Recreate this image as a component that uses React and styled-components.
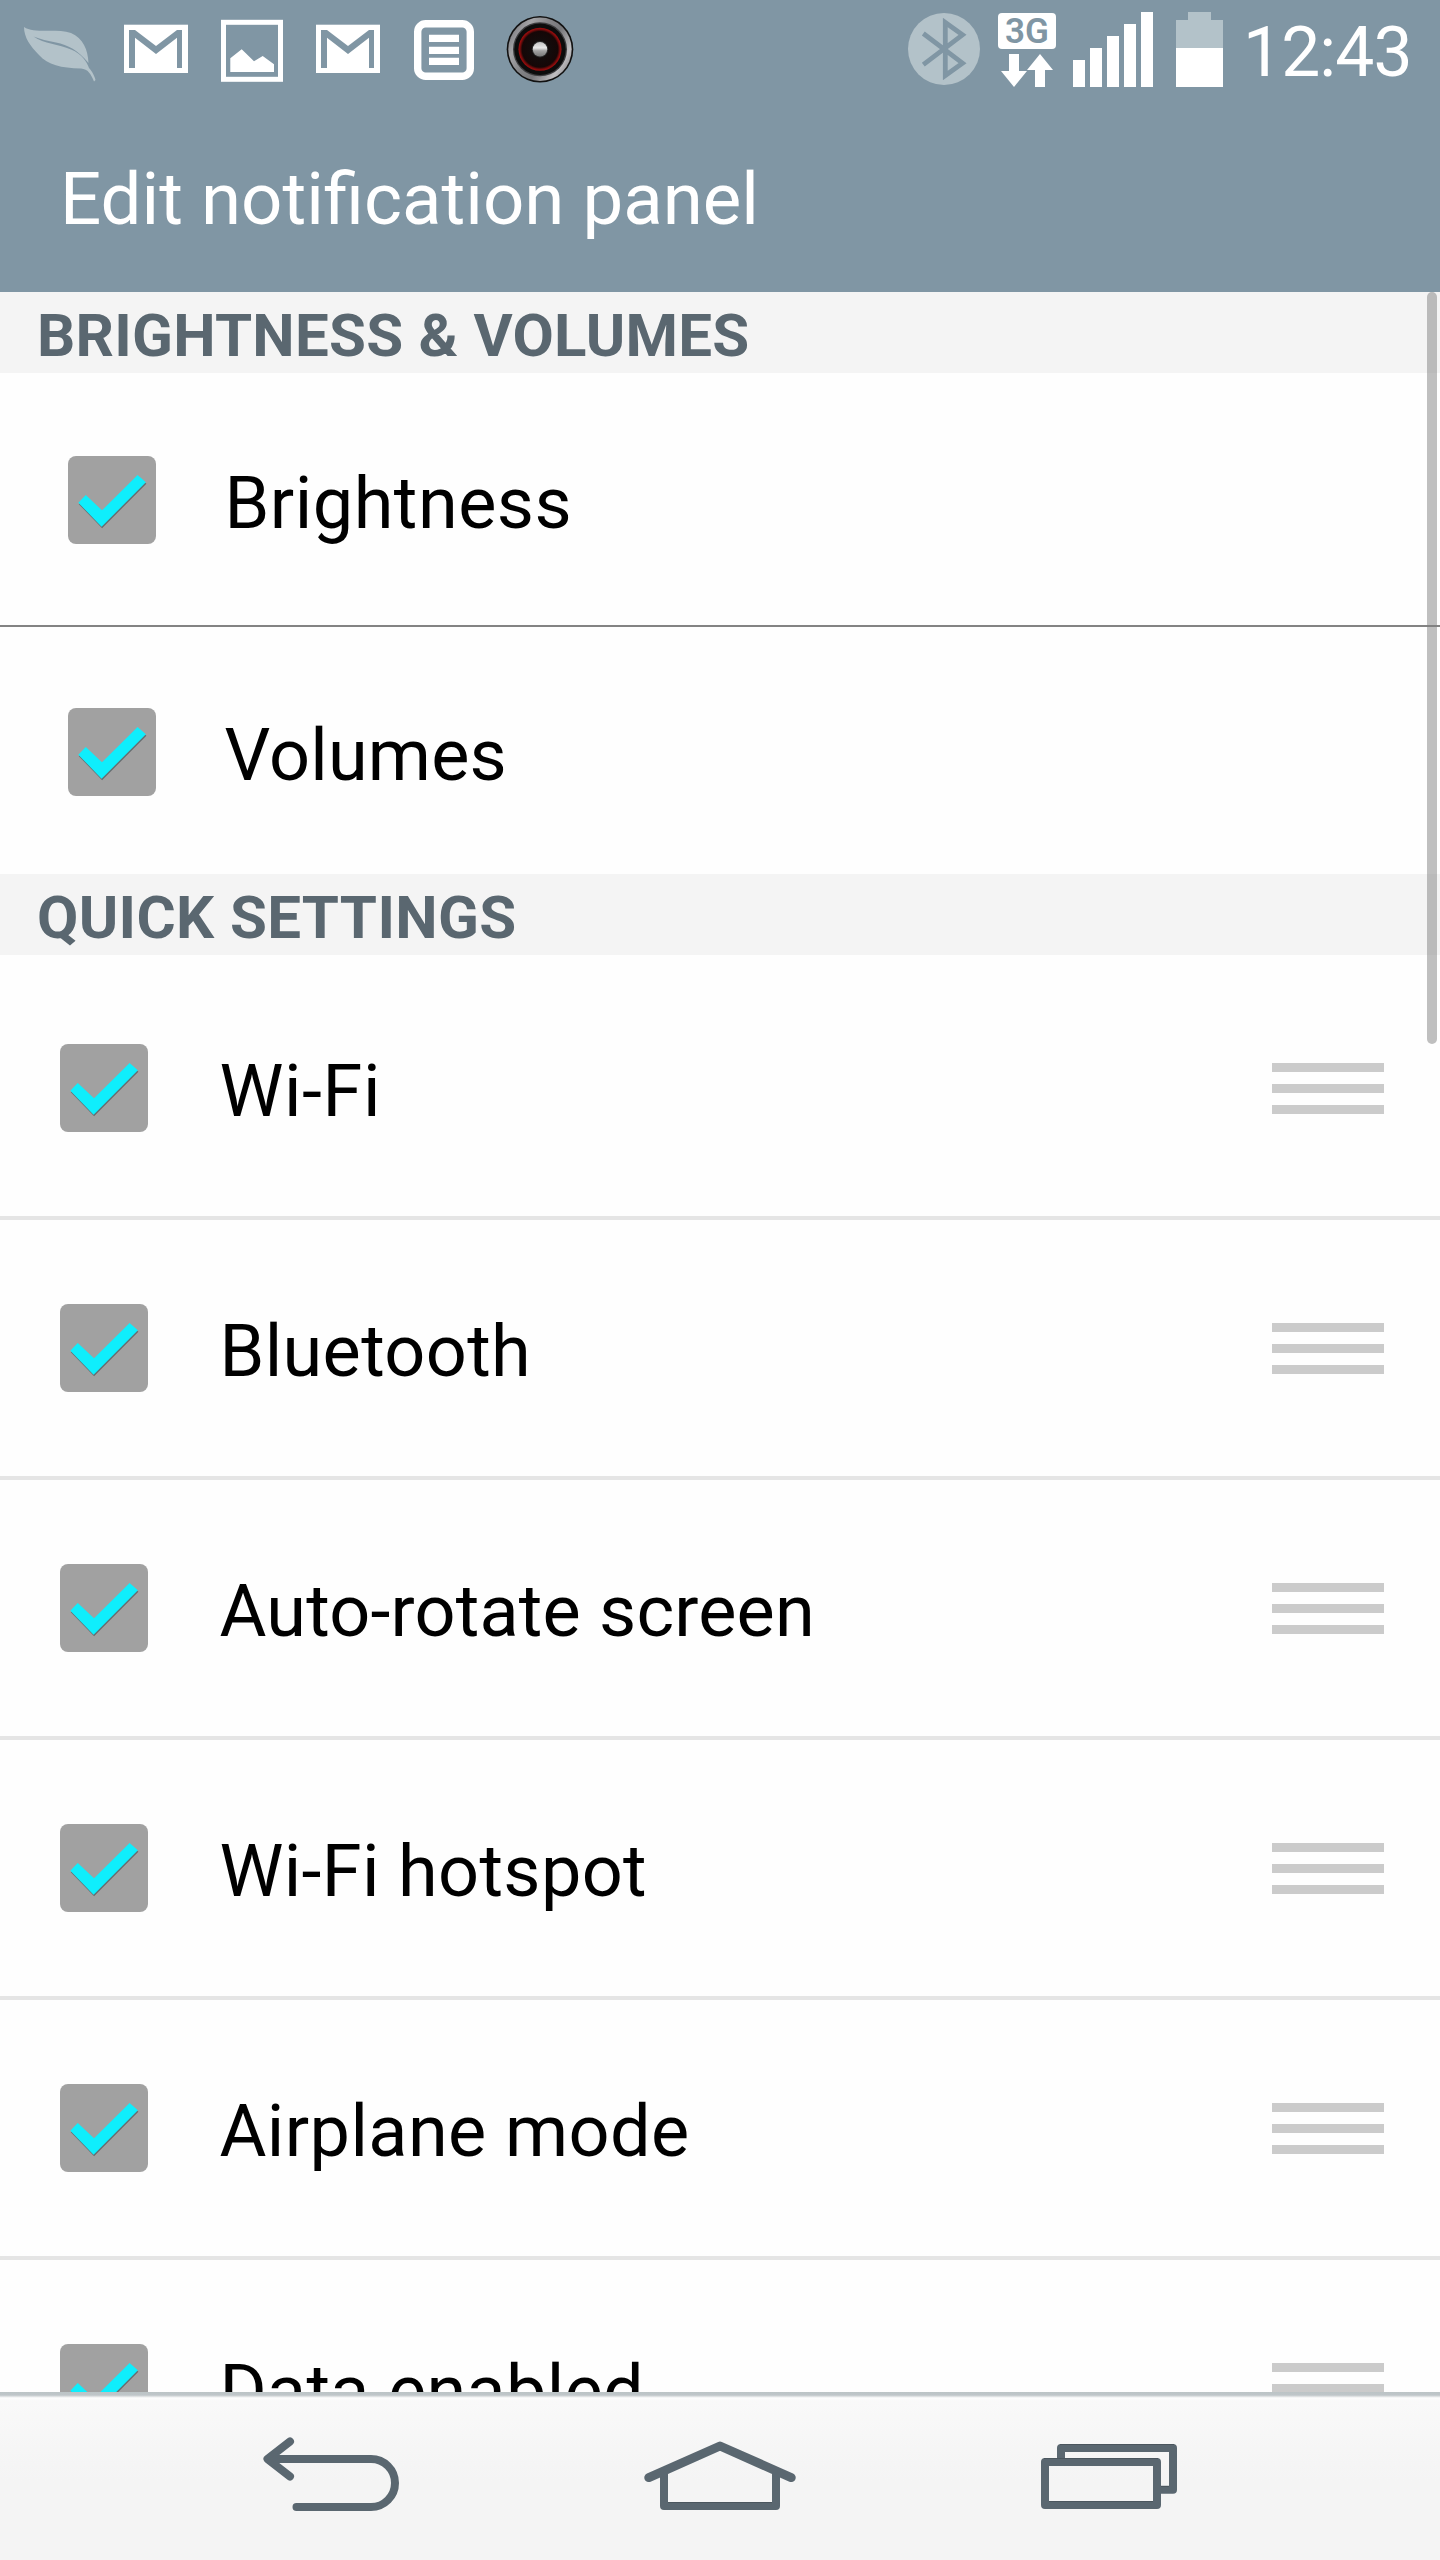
import React, { useState } from "react";
import styled, { createGlobalStyle } from "styled-components";

const SLATE = "#8096a4";
const FADED = "#b3c2c9";
const INK = "#5a6770";

const volumeItems = [
	{ label: "Brightness", spacing: 0.5 },
	{ label: "Volumes", spacing: 0.2 },
];

const quickItems = [
	{ label: "Wi-Fi", spacing: 0.6 },
	{ label: "Bluetooth", spacing: 0.35 },
	{ label: "Auto-rotate screen", spacing: 0.2 },
	{ label: "Wi-Fi hotspot", spacing: 0.35 },
	{ label: "Airplane mode", spacing: 0.4 },
	{ label: "Data enabled", spacing: 0.3 },
];

// ---- Status bar icons ----

const LeafIcon = () => (
	<Slot viewBox="0 0 96 100">
		<path
			d="M12 27 C22 34 44 28 59 33 C71 38 76 50 76.500 63 C66 50 56 45 44 42.500 C36 41 28 39 21.500 36.500 C32 44 47 44 59 49.500 C70 54 75 62 77 68 C80 71 83 77 83.500 80 L82 81.500 C79 74 76 69 69 68.500 C49 68 36 65 27 55 C18 46 12 37 12 27 Z"
			fill={FADED}
		/>
	</Slot>
);

const MailIcon = () => (
	<Slot viewBox="0 0 96 100">
		<rect x="16" y="24.700" width="64" height="48.300" fill="#fff" />
		<path
			d="M21 68 V30 H27 L48 46 L69 30 H74 V68 H69 V37.700 L48 54 L27 37.700 V68 Z"
			fill={SLATE}
		/>
	</Slot>
);

const PictureIcon = () => (
	<Slot viewBox="0 0 96 100">
		<rect
			x="19.500"
			y="22.300"
			width="57"
			height="57"
			fill="none"
			stroke="#fff"
			strokeWidth="5"
		/>
		<path
			d="M26.300 58.300 L37.700 49.300 L50 61.300 L58.700 56 L70 64.300 V72 H26.300 Z"
			fill="#fff"
		/>
	</Slot>
);

const NoteIcon = () => (
	<Slot viewBox="0 0 96 100">
		<rect
			x="21.700"
			y="23.700"
			width="52.600"
			height="52.600"
			rx="8"
			fill="none"
			stroke="#fff"
			strokeWidth="7.400"
		/>
		<path
			d="M33 34.800 H63 V42 H33 Z M33 46.800 H63 V54 H33 Z M33 57.800 H63 V65 H33 Z"
			fill="#fff"
		/>
	</Slot>
);

const SpeakerIcon = () => (
	<Slot viewBox="0 0 96 100">
		<defs>
			<linearGradient id="rim" x1="0" y1="0.2" x2="1" y2="0.8">
				<stop offset="0" stopColor="#77777b" />
				<stop offset="0.2" stopColor="#a5a5a8" />
				<stop offset="0.4" stopColor="#858588" />
				<stop offset="0.6" stopColor="#77777a" />
				<stop offset="0.85" stopColor="#c0bfc2" />
				<stop offset="1" stopColor="#858588" />
			</linearGradient>
			<radialGradient id="cone">
				<stop offset="0" stopColor="#111" />
				<stop offset="0.83" stopColor="#150707" />
				<stop offset="0.93" stopColor="#7a0b0b" />
				<stop offset="1" stopColor="#a30d0d" />
			</radialGradient>
			<linearGradient id="cap" x1="0" y1="0" x2="0" y2="1">
				<stop offset="0" stopColor="#c4c4c4" />
				<stop offset="0.4" stopColor="#e8e8e8" />
				<stop offset="0.6" stopColor="#a2a2a2" />
				<stop offset="1" stopColor="#777" />
			</linearGradient>
		</defs>
		<circle cx="48" cy="49.300" r="33.300" fill="#111" />
		<circle cx="48" cy="49.300" r="31.700" fill="url(#rim)" />
		<circle cx="48" cy="49.300" r="27" fill="#3c3c3e" />
		<circle cx="48" cy="49.300" r="25.700" fill="#0c0c0c" />
		<circle cx="48" cy="49.300" r="21.500" fill="url(#cone)" />
		<circle cx="48" cy="49.300" r="8.200" fill="#2c2c2c" />
		<circle cx="48" cy="49.300" r="7.200" fill="url(#cap)" />
	</Slot>
);

const BluetoothIcon = () => (
	<BluetoothSvg viewBox="0 0 72 100">
		<circle cx="36" cy="49" r="36" fill={FADED} />
		<path
			d="M15.300 33.500 L54.500 63.200 L37.300 75.500 V22.500 L54.500 34.800 L15.300 64.700"
			fill="none"
			stroke={SLATE}
			strokeWidth="4.800"
			strokeMiterlimit="8"
		/>
	</BluetoothSvg>
);

const DataArrows = () => (
	<ArrowsSvg viewBox="0 0 58 34">
		<path
			d="M11 0 H21 V17 H29 L16 33 L3 17 H11 Z M42 0 L55 16 H47 V33 H37 V16 H29 Z"
			fill="#fff"
		/>
	</ArrowsSvg>
);

const SignalIcon = () => (
	<SignalSvg viewBox="0 0 80 100">
		<path
			d="M0 60 H12 V87 H0 Z M17 48 H29 V87 H17 Z M34 36 H46 V87 H34 Z M51 24 H63 V87 H51 Z M68 12 H80 V87 H68 Z"
			fill="#fff"
		/>
	</SignalSvg>
);

const BatteryIcon = () => (
	<BatterySvg viewBox="0 0 47 100">
		<path d="M12 12 H35 V20 H47 V48 H0 V20 H12 Z" fill={FADED} />
		<path d="M0 48 H47 V87 H0 Z" fill="#fff" />
	</BatterySvg>
);

// ---- Navigation icons ----

const BackIcon = () => (
	<NavSvg viewBox="255 2392 152 168">
		<path
			d="M290 2441.500 L267.500 2459 L290 2476.500 M269 2459 H371 A24 24 0 0 1 371 2507 H296.500"
			strokeLinecap="round"
		/>
	</NavSvg>
);

const HomeIcon = () => (
	<NavSvg viewBox="644 2392 152 168">
		<Roof d="M648.800 2477.600 L720 2446 L791.200 2477.600" />
		<path d="M664 2474 V2506 H776 V2474" />
		<Edge d="M668 2502.500 H772" />
	</NavSvg>
);

const RecentsIcon = () => (
	<NavSvg viewBox="1033 2392 152 168">
		<path d="M1061 2460 V2448 H1173 V2489.700 H1159" />
		<rect x="1045" y="2462" width="112" height="43" />
		<Edge d="M1060 2444.500 H1174 M1044 2458.500 H1158 M1049 2501.500 H1153 M1161 2486.500 H1169" />
	</NavSvg>
);

// ---- Components ----

const tick =
	"M10.300 46.700 L17.800 39 L34 54.300 L69.600 19 L77.900 26.300 L33.600 70.700 Z";

const Checkbox = ({ checked, onToggle, label }) => (
	<Box role="checkbox" aria-checked={checked} aria-label={label} onClick={onToggle}>
		{checked && (
			<svg width="88" height="88" viewBox="0 0 88 88">
				<path d={tick} fill="#666d70" transform="translate(0.5 1.5)" />
				<path d={tick} fill="#0feefc" />
			</svg>
		)}
	</Box>
);

const App = () => {
	const [off, setOff] = useState([]);

	const toggle = (name) => {
		setOff(off.includes(name) ? off.filter((n) => n !== name) : [...off, name]);
	};

	return (
		<>
			<GlobalStyle />
			<Screen>
				<Header>
					<StatusBar>
						<LeafIcon />
						<MailIcon />
						<PictureIcon />
						<MailIcon />
						<NoteIcon />
						<SpeakerIcon />
						<StatusRight>
							<BluetoothIcon />
							<Network>
								<NetworkLabel>3G</NetworkLabel>
								<DataArrows />
							</Network>
							<SignalIcon />
							<BatteryIcon />
							<Clock>12:43</Clock>
						</StatusRight>
					</StatusBar>
					<Title>Edit notification panel</Title>
				</Header>
				<Content>
					<SectionTitle $spacing={0.25}>BRIGHTNESS &amp; VOLUMES</SectionTitle>
					<VolumeList>
						{volumeItems.map(({ label, spacing }) => (
							<VolumeRow key={label}>
								<Checkbox
									label={label}
									checked={!off.includes(label)}
									onToggle={() => toggle(label)}
								/>
								<Label $gap={68.5} $spacing={spacing}>
									{label}
								</Label>
							</VolumeRow>
						))}
					</VolumeList>
					<SectionTitle $spacing={0.35}>QUICK SETTINGS</SectionTitle>
					<QuickList>
						{quickItems.map(({ label, spacing }) => (
							<QuickRow key={label}>
								<Checkbox
									label={label}
									checked={!off.includes(label)}
									onToggle={() => toggle(label)}
								/>
								<Label $gap={71.5} $spacing={spacing}>
									{label}
								</Label>
								<Grip>
									<GripLine />
									<GripLine />
									<GripLine />
								</Grip>
							</QuickRow>
						))}
					</QuickList>
					<ScrollThumb />
				</Content>
				<NavBar>
					<BackIcon />
					<HomeIcon />
					<RecentsIcon />
				</NavBar>
			</Screen>
		</>
	);
};

export default App;

// ---- Style ----

const GlobalStyle = createGlobalStyle`
	* {
		box-sizing: border-box;
	}

	body {
		margin: 0;
		background: #fff;
	}
`;

const Screen = styled.div`
	width: 1440px;
	height: 2560px;
	overflow: hidden;

	display: flex;
	flex-direction: column;

	background: #fefefe;
	font-family: Roboto, "Noto Sans", sans-serif;
`;

const Header = styled.header`
	height: 292px;
	flex-shrink: 0;
	background: ${SLATE};
	color: #fff;
`;

const StatusBar = styled.div`
	height: 100px;
	padding: 0 28px 0 12px;

	display: flex;
	align-items: flex-start;
`;

const Slot = styled.svg`
	width: 96px;
	height: 100px;
	flex-shrink: 0;
`;

const StatusRight = styled.div`
	width: 504px;
	margin-left: auto;

	display: flex;
	align-items: flex-start;

	> * {
		flex-shrink: 0;
	}
`;

const BluetoothSvg = styled.svg`
	width: 72px;
	height: 100px;
`;

const Network = styled.div`
	width: 58px;
	margin: 13px 17px 0 18px;

	display: flex;
	flex-direction: column;
	gap: 5px;
`;

const NetworkLabel = styled.span`
	height: 36px;
	border-radius: 4px;
	background: #fff;
	color: ${SLATE};

	font-size: 35px;
	font-weight: 600;
	line-height: 37px;
	text-align: center;
`;

const ArrowsSvg = styled.svg`
	width: 58px;
	height: 34px;
`;

const SignalSvg = styled.svg`
	width: 80px;
	height: 100px;
	margin-right: 23px;
`;

const BatterySvg = styled.svg`
	width: 47px;
	height: 100px;
	margin-right: 20px;
`;

const Clock = styled.span`
	padding-top: 12px;
	font-size: 69.5px;
	line-height: 81px;
	letter-spacing: -0.9px;
	white-space: nowrap;
`;

const Title = styled.h1`
	margin: 57px 0 0 60px;
	font-size: 72.6px;
	font-weight: 400;
	line-height: 85px;
	white-space: nowrap;
`;

const Content = styled.main`
	position: relative;
	height: 2100px;
	flex-shrink: 0;
	overflow: hidden;
`;

const SectionTitle = styled.h2`
	margin: 0;
	height: 81px;
	padding: 8px 0 0 37px;

	background: #f4f4f4;
	color: ${INK};

	font-size: 60px;
	font-weight: 700;
	line-height: 71px;
	letter-spacing: ${({ $spacing }) => $spacing}px;
	white-space: nowrap;
`;

const VolumeList = styled.div`
	height: 501px;
`;

const VolumeRow = styled.div`
	height: 252px;
	padding: 2px 0 0 68px;

	display: flex;
	align-items: center;

	&:first-child {
		height: 254px;
		border-bottom: 2px solid #838383;
	}

	&:last-child {
		height: 247px;
		padding-top: 3px;
	}
`;

const QuickList = styled.div`
	padding-top: 5px;
`;

const QuickRow = styled.div`
	height: 260px;
	padding: 0 56px 0 60px;
	border-bottom: 4px solid #e5e5e5;

	display: flex;
	align-items: center;
`;

const Box = styled.div`
	width: 88px;
	height: 88px;
	flex-shrink: 0;
	border-radius: 8px;
	background: #a1a1a1;
	cursor: pointer;

	svg {
		display: block;
	}
`;

const Label = styled.span`
	margin-left: ${({ $gap }) => $gap}px;
	padding-top: 7px;

	color: #000;
	font-size: 72px;
	line-height: 85px;
	letter-spacing: ${({ $spacing }) => $spacing}px;
	white-space: nowrap;
`;

const Grip = styled.div`
	width: 112px;
	margin-left: auto;
	padding-top: 1px;

	display: flex;
	flex-direction: column;
	gap: 12px;
`;

const GripLine = styled.div`
	height: 9px;
	background: #cbcbcb;
`;

const ScrollThumb = styled.div`
	position: absolute;
	top: 0;
	right: 3px;
	width: 10px;
	height: 752px;
	border-radius: 5px;
	background: rgba(128, 128, 128, 0.5);
`;

const NavBar = styled.nav`
	height: 168px;
	flex-shrink: 0;
	padding: 0 255px;

	display: flex;
	justify-content: space-between;

	background: linear-gradient(
		#bcc4c6 0,
		#bfc6c9 3px,
		#d2d6d8 4px,
		#eceeee 5px,
		#fdfdfd 6px,
		#fcfcfc 7px,
		#f9f9f9 9px,
		#f4f4f4 90px,
		#f4f4f4 100%
	);
`;

const NavSvg = styled.svg`
	width: 152px;
	height: 168px;

	fill: none;
	stroke: ${INK};
	stroke-width: 8px;
	stroke-linejoin: round;
`;

const Roof = styled.path`
	stroke-width: 9px;
	stroke-linecap: round;
`;

// dark top edge of the icon strokes
const Edge = styled.path`
	stroke: #4b565e;
	stroke-width: 1px;
`;
